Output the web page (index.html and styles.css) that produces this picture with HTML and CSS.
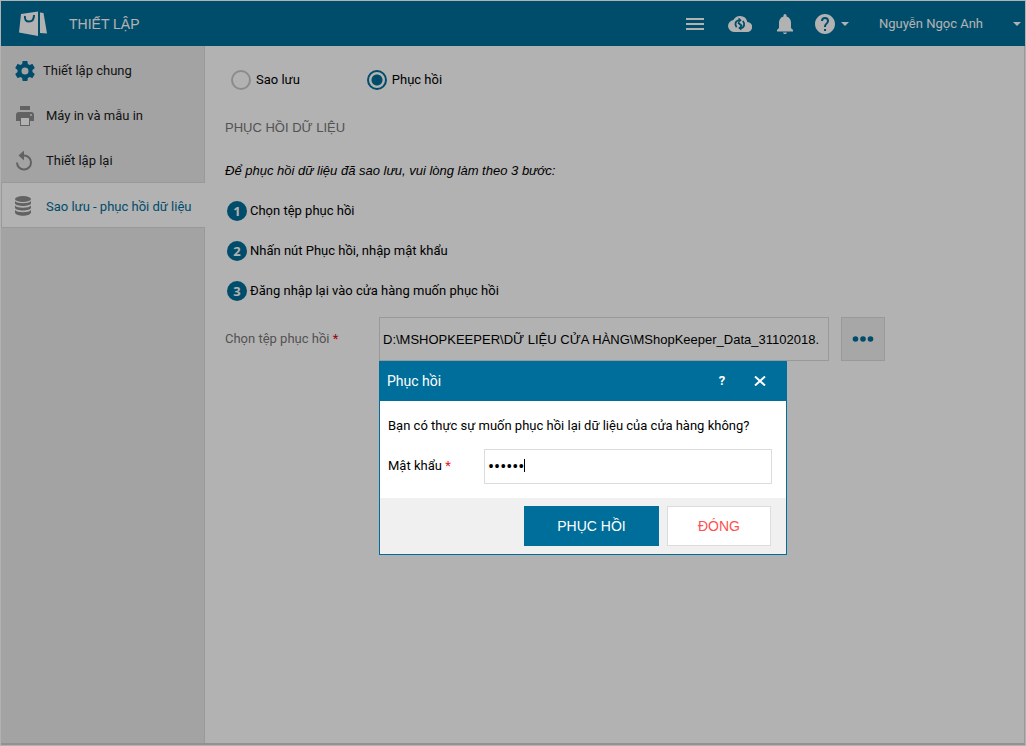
FILE: index.html
```html
<!DOCTYPE html>
<html lang="vi">
<head>
<meta charset="utf-8">
<title>Thiết lập</title>
<link rel="stylesheet" href="styles.css">
</head>
<body>
<div class="app">
  <header class="topbar">
    <svg class="logo" viewBox="0 0 30 28" width="30" height="28" aria-hidden="true">
      <path fill="#fff" d="M3 4 20 1.500v24.500L1 22.500z"/>
      <path fill="#fff" d="M22 2.500 25.500 3 29 23.500 22 23z"/>
      <path d="M7 6c-.6 3.500 1 5.500 4 5.500s5-2.500 5-6.500" fill="none" stroke="#006e9a" stroke-width="2"/>
    </svg>
    <h1 class="topbar-title">THIẾT LẬP</h1>
    <nav class="tools" aria-label="Công cụ">
      <button class="tool" type="button" aria-label="Menu">
        <svg viewBox="0 0 18 14" width="18" height="14"><path fill="#fff" d="M0 1h18v2H0zM0 6h18v2H0zM0 11h18v2H0z"/></svg>
      </button>
      <button class="tool" type="button" aria-label="Đồng bộ">
        <svg viewBox="0 0 24 18" width="24" height="18"><path fill="#fff" d="M19.350 7A7.490 7.490 0 0 0 12 1C9.110 1 6.600 2.640 5.350 5.040A6 6 0 0 0 6 17h13a5 5 0 0 0 .35-10z"/><path d="M8.600 12.300C6.300 9.500 7.500 5.500 11 5.300M14.800 6c2.500 2.700 1.500 6.700-2 7M10 7.500l4 3.500" fill="none" stroke="#006e9a" stroke-width="1.800"/><path fill="#006e9a" d="m10.500 2.600 3.200 2.700-3.200 2.700zM13.300 10.200 10.100 12.900l3.200 2.700z"/></svg>
      </button>
      <button class="tool" type="button" aria-label="Thông báo">
        <svg viewBox="0 0 18 20" width="18" height="20"><path fill="#fff" d="M9 20c1.200 0 2-.6 2-1.500H7C7 19.400 7.800 20 9 20zM15 14V8.500C15 5.500 13.300 3 10.500 2.400V1.500a1.500 1.500 0 0 0-3 0v.9C4.700 3 3 5.500 3 8.500V14l-2 2v1.500h16V16z"/></svg>
      </button>
      <button class="tool tool-help" type="button" aria-label="Trợ giúp">
        <svg viewBox="2 2 20 20" width="20" height="20"><path fill="#fff" d="M12 2C6.480 2 2 6.480 2 12s4.480 10 10 10 10-4.480 10-10S17.520 2 12 2zm1 17h-2v-2h2v2zm2.070-7.750-.9.920C13.450 12.900 13 13.500 13 15h-2v-.5c0-1.100.45-2.100 1.170-2.830l1.240-1.260c.37-.36.59-.86.59-1.410a2 2 0 1 0-4 0H8a4 4 0 1 1 8 0c0 .88-.36 1.680-.93 2.250z"/></svg>
        <span class="caret"></span>
      </button>
    </nav>
    <button class="user" type="button">Nguyễn Ngọc Anh<span class="caret"></span></button>
  </header>

  <div class="body">
    <nav class="sidebar">
      <a class="side-item" href="#chung">
        <svg class="side-icon" viewBox="2 2 20 20" width="20" height="20"><path fill="#006e9a" d="M19.430 12.980c.04-.32.070-.64.070-.98s-.03-.66-.07-.98l2.110-1.650c.19-.15.240-.42.120-.64l-2-3.460c-.12-.22-.39-.3-.61-.22l-2.490 1c-.52-.4-1.080-.73-1.690-.98l-.38-2.650A.488.488 0 0 0 14 2h-4c-.25 0-.46.180-.49.420l-.38 2.650c-.61.250-1.170.590-1.690.980l-2.490-1c-.23-.09-.49 0-.61.220l-2 3.460c-.13.220-.07.490.120.640l2.110 1.650c-.04.320-.07.650-.07.980s.03.660.070.980l-2.110 1.650c-.19.150-.24.420-.12.640l2 3.460c.12.220.390.300.610.220l2.490-1c.52.400 1.080.730 1.690.980l.38 2.650c.03.240.240.420.490.420h4c.25 0 .46-.18.490-.42l.38-2.650c.61-.25 1.170-.59 1.690-.98l2.490 1c.23.090.490 0 .61-.22l2-3.460c.12-.22.070-.49-.12-.64l-2.110-1.650zM12 15.500a3.500 3.500 0 1 1 0-7 3.500 3.500 0 0 1 0 7z"/></svg>
        <span>Thiết lập chung</span>
      </a>
      <a class="side-item" href="#may-in">
        <svg class="side-icon" viewBox="0 0 20 20" width="20" height="20"><path fill="#8d8d8d" d="M5 0h10v4H5zM16 6H4a3 3 0 0 0-3 3v6h4v5h10v-5h4V9a3 3 0 0 0-3-3zm0 4a1 1 0 1 1 0-2 1 1 0 0 1 0 2z"/><path fill="#fff" d="M6 12h8v7H6z"/></svg>
        <span class="indent">Máy in và mẫu in</span>
      </a>
      <a class="side-item" href="#lap-lai">
        <svg class="side-icon" viewBox="3 2 20 20" width="20" height="20"><path fill="#8d8d8d" d="M12 5.500V1.500L6.500 6.500l5.500 5V7.500a6 6 0 1 1-6 6H4a8 8 0 1 0 8-8z"/></svg>
        <span class="indent">Thiết lập lại</span>
      </a>
      <a class="side-item side-item-active" href="#sao-luu" aria-current="page">
        <svg class="side-icon" viewBox="1 0 20 20" width="20" height="20"><g fill="#8d8d8d"><ellipse cx="9" cy="3" rx="8" ry="3"/><path d="M1 5c2 3 14 3 16 0v2.500c-1 3.300-15 3.300-16 0zM1 9.500c2 3 14 3 16 0V12c-1 3.300-15 3.300-16 0zM1 14c2 3 14 3 16 0v2.500c-1 4.300-15 4.300-16 0z"/></g></svg>
        <span class="indent">Sao lưu - phục hồi dữ liệu</span>
      </a>
    </nav>

    <main class="content">
      <div class="radios">
        <label class="radio"><input type="radio" name="mode">Sao lưu</label>
        <label class="radio"><input type="radio" name="mode" checked>Phục hồi</label>
      </div>
      <h2 class="section-title">PHỤC HỒI DỮ LIỆU</h2>
      <p class="intro">Để phục hồi dữ liệu đã sao lưu, vui lòng làm theo 3 bước:</p>
      <ol class="steps">
        <li><span class="num">1</span>Chọn tệp phục hồi</li>
        <li><span class="num">2</span>Nhấn nút Phục hồi, nhập mật khẩu</li>
        <li><span class="num">3</span>Đăng nhập lại vào cửa hàng muốn phục hồi</li>
      </ol>
      <div class="file-row">
        <label class="file-label" for="file">Chọn tệp phục hồi <span class="req">*</span></label>
        <input class="file-input" id="file" type="text" value="D:\MSHOPKEEPER\DỮ LIỆU CỬA HÀNG\MShopKeeper_Data_31102018.">
        <button class="browse" type="button" aria-label="Chọn tệp">
          <svg viewBox="0 0 22 6" width="22" height="6"><g fill="#006e9a"><circle cx="3.500" cy="3" r="2.800"/><circle cx="11" cy="3" r="2.800"/><circle cx="18.500" cy="3" r="2.800"/></g></svg>
        </button>
      </div>
    </main>
  </div>
</div>

<div class="overlay"></div>
<section class="dialog" role="dialog" aria-labelledby="dialog-title">
  <header class="dialog-head">
    <h2 id="dialog-title">Phục hồi</h2>
    <button type="button" class="head-btn" aria-label="Trợ giúp">?</button>
    <button type="button" class="head-btn" aria-label="Đóng cửa sổ">
      <svg viewBox="0 0 12 10" width="12" height="10"><path d="m1 .5 10 9M11 .5l-10 9" stroke="#fff" stroke-width="2"/></svg>
    </button>
  </header>
  <div class="dialog-body">
    <p>Bạn có thực sự muốn phục hồi lại dữ liệu của cửa hàng không?</p>
    <div class="pass-row">
      <label for="pass">Mật khẩu <span class="req-light">*</span></label>
      <div class="pass-box">
        <input id="pass" type="password" value="123456">
        <span class="text-cursor"></span>
      </div>
    </div>
  </div>
  <footer class="dialog-foot">
    <button type="button" class="btn btn-primary">PHỤC HỒI</button>
    <button type="button" class="btn btn-cancel">ĐÓNG</button>
  </footer>
</section>
</body>
</html>
```
FILE: styles.css
```css
* { box-sizing: border-box; }
body {
  margin: 0;
  font: 13px/20px Roboto, "Liberation Sans", sans-serif;
  color: #000;
  background: #fff;
}
h1, h2, p, ol { margin: 0; padding: 0; font-weight: 400; }
button, input { font: inherit; color: inherit; }
button { cursor: pointer; padding: 0; border: 0; background: none; }
svg { display: block; }

.app {
  display: flex;
  flex-direction: column;
  min-height: 100vh;
  padding: 1px;
}

.topbar {
  display: flex;
  align-items: center;
  height: 45px;
  padding: 0 4px 0 17px;
  background: #006e9a;
  color: #fff;
}
.topbar-title,
.section-title,
.intro,
.file-input,
.btn { font-family: "Liberation Sans", Arial, sans-serif; }
.topbar-title { margin-left: 21px; font-size: 14px; }
.tools { display: flex; align-items: center; gap: 24px; margin-left: auto; }
.tool { display: flex; align-items: center; }
.tool-help { gap: 6px; margin-left: -3px; }
.caret {
  width: 0;
  border: 4px solid transparent;
  border-top-color: #fff;
  border-bottom: 0;
}
.user { display: flex; align-items: center; gap: 30px; margin-left: 30px; }

.body {
  display: flex;
  flex: 1;
  border-right: 1px solid #dcdcdc;
  border-bottom: 2px solid #d0d0d0;
}
.sidebar {
  flex: none;
  width: 204px;
  padding-top: 1px;
  background: #eaeaea;
  border-right: 1px solid #dcdcdc;
}
.side-item {
  display: flex;
  align-items: center;
  gap: 8px;
  height: 45px;
  padding: 2px 0 0 14px;
  color: #1a1a1a;
  text-decoration: none;
}
.side-icon { flex: none; }
.side-item span { padding-top: 1px; }
.side-item .indent { padding-left: 3px; }
.side-item-active {
  width: 204px;
  height: 46px;
  padding-left: 13px;
  border: solid #dcdcdc;
  border-width: 1px 0 1px 1px;
  background: #fff;
  color: #006e9a;
}

.content { flex: 1; min-width: 0; padding: 24px 20px; }
.radios { display: flex; gap: 67px; padding-left: 6px; }
.radio { display: flex; align-items: center; gap: 5px; }
.radio input {
  appearance: none;
  width: 20px;
  height: 20px;
  margin: 0;
  border: 2px solid #c8c8c8;
  border-radius: 50%;
}
.radio input:checked {
  border-color: #006e9a;
  background: radial-gradient(circle, #006e9a 5px, transparent 6px);
}
.section-title { margin-top: 28px; font-size: 13px; color: #777; }
.intro { margin-top: 23px; font-style: italic; }
.steps { list-style: none; margin-top: 20px; padding-left: 2px; }
.steps li { display: flex; align-items: center; gap: 3px; margin-bottom: 20px; }
.num {
  width: 20px;
  height: 20px;
  border-radius: 50%;
  background: #006e9a;
  color: #fff;
  font-family: "Open Sans", sans-serif;
  font-weight: 700;
  text-align: center;
}
.file-row { display: flex; align-items: center; margin-top: -4px; }
.file-label { flex: none; width: 154px; color: #777; }
.req { color: #e00018; }
.file-input {
  width: 450px;
  height: 44px;
  padding: 0 3px;
  border: 1px solid #dcdcdc;
  background: #fff;
}
.browse {
  display: grid;
  place-items: center;
  width: 44px;
  height: 44px;
  margin-left: 12px;
  border: 1px solid #dcdcdc;
  background: #f0f0f0;
}

.overlay { position: fixed; inset: 0; background: rgba(0, 0, 0, .3); }
.dialog {
  position: absolute;
  left: 379px;
  top: 361px;
  width: 408px;
  border: 1px solid #006e9a;
  background: #fff;
}
.dialog-head {
  display: flex;
  align-items: center;
  height: 39px;
  padding: 0 7px 2px;
  background: #006e9a;
  color: #fff;
}
.dialog-head h2 { flex: 1; font-size: 14px; }
.head-btn { display: grid; place-items: center; width: 38px; height: 37px; font-weight: 700; }
.dialog-body { padding: 15px 14px 14px 8px; }
.pass-row { display: flex; align-items: center; margin-top: 13px; }
.pass-row label { width: 96px; padding-bottom: 2px; }
.req-light { color: #f01010; }
.pass-box { position: relative; flex: 1; }
.pass-box input {
  display: block;
  width: 100%;
  height: 35px;
  padding: 0 3px;
  border: 1px solid #dcdcdc;
  background: #fff;
  font-size: 18px;
}
.text-cursor {
  position: absolute;
  left: 40px;
  top: 10px;
  width: 1px;
  height: 13px;
  background: #000;
}
.dialog-foot {
  display: flex;
  justify-content: flex-end;
  gap: 8px;
  padding: 8px 15px;
  background: #f0f0f0;
}
.btn { height: 40px; font-size: 14px; }
.btn-primary { width: 135px; background: #006e9a; color: #fff; }
.btn-cancel { width: 104px; border: 1px solid #dcdcdc; background: #fff; color: #ff5050; }
```
